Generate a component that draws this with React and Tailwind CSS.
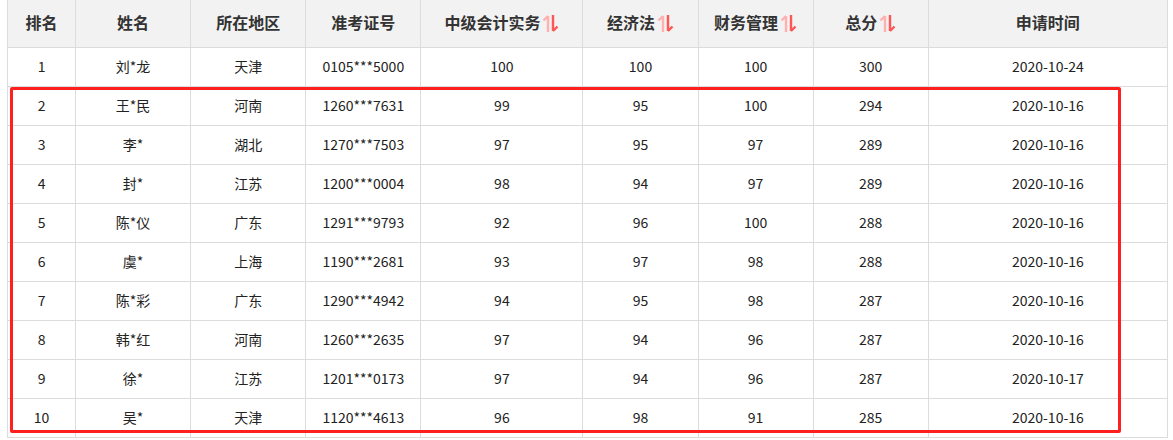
import React from 'react';

const rows = [
  ['1', '刘*龙', '天津', '0105***5000', '100', '100', '100', '300', '2020-10-24'],
  ['2', '王*民', '河南', '1260***7631', '99', '95', '100', '294', '2020-10-16'],
  ['3', '李*', '湖北', '1270***7503', '97', '95', '97', '289', '2020-10-16'],
  ['4', '封*', '江苏', '1200***0004', '98', '94', '97', '289', '2020-10-16'],
  ['5', '陈*仪', '广东', '1291***9793', '92', '96', '100', '288', '2020-10-16'],
  ['6', '虞*', '上海', '1190***2681', '93', '97', '98', '288', '2020-10-16'],
  ['7', '陈*彩', '广东', '1290***4942', '94', '95', '98', '287', '2020-10-16'],
  ['8', '韩*红', '河南', '1260***2635', '97', '94', '96', '287', '2020-10-16'],
  ['9', '徐*', '江苏', '1201***0173', '97', '94', '96', '287', '2020-10-17'],
  ['10', '吴*', '天津', '1120***4613', '96', '98', '91', '285', '2020-10-16'],
];

const headers = [
  { label: '排名', w: 'w-[68px]' },
  { label: '姓名', w: 'w-[115px]' },
  { label: '所在地区', w: 'w-[115px]' },
  { label: '准考证号', w: 'w-[115px]' },
  { label: '中级会计实务', w: 'w-[162px]', sort: true },
  { label: '经济法', w: 'w-[115px]', sort: true },
  { label: '财务管理', w: 'w-[115px]', sort: true },
  { label: '总分', w: 'w-[115px]', sort: true },
  { label: '申请时间', w: 'w-[239px]' },
];

function SortIcon() {
  return (
    <svg width="17" height="19" viewBox="0 0 17 19" className="inline-block ml-[2px] -mt-[3px] align-middle">
      <path d="M6 18V2M1.5 6.5L6 2" stroke="#ffb0b0" strokeWidth="2.4" fill="none" />
      <path d="M11 1V17M15.5 12.5L11 17" stroke="#ff5656" strokeWidth="2.4" fill="none" />
    </svg>
  );
}

export default function App() {
  return (
    <div className="relative w-[1173px] h-[440px] bg-white overflow-hidden font-['Noto_Sans_CJK_SC','Liberation_Sans',sans-serif] text-[#333]">
      <table className="ml-[7px] w-[1161px] border-collapse table-fixed">
        <thead>
          <tr className="h-[47px] bg-[#f2f2f2]">
            {headers.map((h) => (
              <th
                key={h.label}
                className={`${h.w} border border-[#dcdcdc] border-t-0 text-[16px] font-bold text-[#333] text-center align-middle pb-[2px]`}
              >
                {h.label}
                {h.sort && <SortIcon />}
              </th>
            ))}
          </tr>
        </thead>
        <tbody>
          {rows.map((r) => (
            <tr key={r[0]} className="h-[39px]">
              {r.map((c, i) => (
                <td
                  key={i}
                  className="border border-[#dcdcdc] text-[14px] leading-[16px] pb-[1px] text-center align-middle text-[#222]"
                >
                  {c}
                </td>
              ))}
            </tr>
          ))}
        </tbody>
      </table>
      {/* red highlight box */}
      <div className="absolute left-[10px] top-[87px] w-[1111px] h-[346px] border-[3px] border-[#ff1f1f] rounded-[2px] pointer-events-none" />
    </div>
  );
}
